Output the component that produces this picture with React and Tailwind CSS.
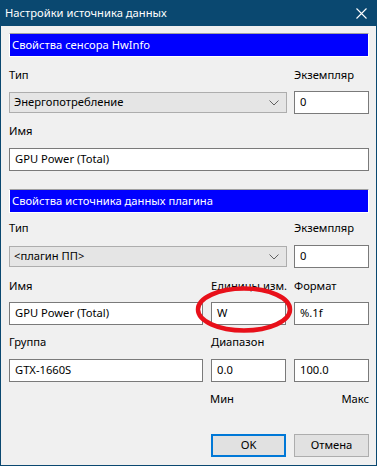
import React from "react";

const font = { fontFamily: '"Noto Sans", "Liberation Sans", sans-serif' };

function Chevron() {
  return (
    <svg width="10" height="6" viewBox="0 0 10 6" className="shrink-0">
      <path d="M0.5 0.5 L5 5 L9.5 0.5" fill="none" stroke="#606060" strokeWidth="1" />
    </svg>
  );
}

function Select({ text }) {
  return (
    <div className="w-[278px] h-[21px] border border-[#adadad] bg-[#e5e5e5] flex items-center justify-between pl-[4px] pr-[7px] text-[11.2px] text-black">
      <span>{text}</span>
      <Chevron />
    </div>
  );
}

function Input({ text, w }) {
  return (
    <div className={`${w} h-[23px] border border-[#7a7a7a] bg-white flex items-center pl-[5px] text-[11.2px] text-black`}>
      {text}
    </div>
  );
}

function Header({ text }) {
  return (
    <div className="h-[24px] border-t border-t-[#a0a0a0] border-l border-l-white border-r border-r-white border-b border-b-white bg-[#0000ff] flex items-center pl-[2px] text-[11.2px] text-white">
      {text}
    </div>
  );
}

function Label({ children, className = "" }) {
  return <div className={`h-[16px] flex items-center text-[11.2px] text-black leading-none whitespace-nowrap ${className}`}>{children}</div>;
}

export default function App() {
  return (
    <div className="w-[377px] h-[466px] bg-[#0a4870] flex flex-col relative select-none" style={font}>
      <div className="h-[26px] flex items-center justify-between pl-[5px] pr-[10px] text-white text-[11.2px]">
        <span>Настройки источника данных</span>
        <svg width="11" height="11" viewBox="0 0 11 11">
          <path d="M0.5 0.5 L10.5 10.5 M10.5 0.5 L0.5 10.5" stroke="white" strokeWidth="1.1" fill="none" />
        </svg>
      </div>
      <div className="flex-1 mx-[1px] mb-[1px] bg-[#f0f0f0] flex flex-col pl-[8px] pr-[7px]">
        <div className="mt-[7px]">
          <Header text="Свойства сенсора HwInfo" />
        </div>
        <div className="mt-[10px] flex">
          <Label className="w-[285px]">Тип</Label>
          <Label>Экземпляр</Label>
        </div>
        <div className="mt-[8px] h-[23px] flex items-center gap-[7px]">
          <Select text="Энергопотребление" />
          <Input text="0" w="w-[75px]" />
        </div>
        <Label className="mt-[9px]">Имя</Label>
        <div className="mt-[9px]">
          <Input text="GPU Power (Total)" w="w-full" />
        </div>

        <div className="mt-[18px]">
          <Header text="Свойства источника данных плагина" />
        </div>
        <div className="mt-[7px] flex">
          <Label className="w-[285px]">Тип</Label>
          <Label>Экземпляр</Label>
        </div>
        <div className="mt-[9px] h-[23px] flex items-center gap-[7px]">
          <Select text="<плагин ПП>" />
          <Input text="0" w="w-[75px]" />
        </div>

        <div className="mt-[10px] flex">
          <Label className="w-[202px]">Имя</Label>
          <Label className="w-[83px]">Единицы изм.</Label>
          <Label>Формат</Label>
        </div>
        <div className="mt-[8px] flex gap-[8px]">
          <Input text="GPU Power (Total)" w="w-[194px]" />
          <Input text="W" w="w-[75px]" />
          <Input text="%.1f" w="w-[75px]" />
        </div>

        <div className="mt-[9px] flex">
          <Label className="w-[202px]">Группа</Label>
          <Label>Диапазон</Label>
        </div>
        <div className="mt-[9px] flex gap-[8px]">
          <Input text="GTX-1660S" w="w-[194px]" />
          <Input text="0.0" w="w-[75px]" />
          <Input text="100.0" w="w-[75px]" />
        </div>

        <div className="mt-[9px] flex">
          <div className="w-[201px]" />
          <Label className="flex-1 justify-between">
            <span>Мин</span>
            <span>Макс</span>
          </Label>
        </div>

        <div className="mt-[27px] flex gap-[8px] pl-[202px]">
          <div className="w-[75px] h-[23px] border-2 border-[#0078d7] bg-[#e1e1e1] flex items-center justify-center text-[11.2px] text-black">
            OK
          </div>
          <div className="w-[75px] h-[23px] border border-[#adadad] bg-[#e1e1e1] flex items-center justify-center text-[11.2px] text-black">
            Отмена
          </div>
        </div>
      </div>

      <svg className="absolute left-[194px] top-[285px] pointer-events-none" width="100" height="49" viewBox="0 0 100 49">
        <ellipse cx="50" cy="24.5" rx="46" ry="21" fill="none" stroke="#e8101a" strokeWidth="4.5" />
      </svg>
    </div>
  );
}
